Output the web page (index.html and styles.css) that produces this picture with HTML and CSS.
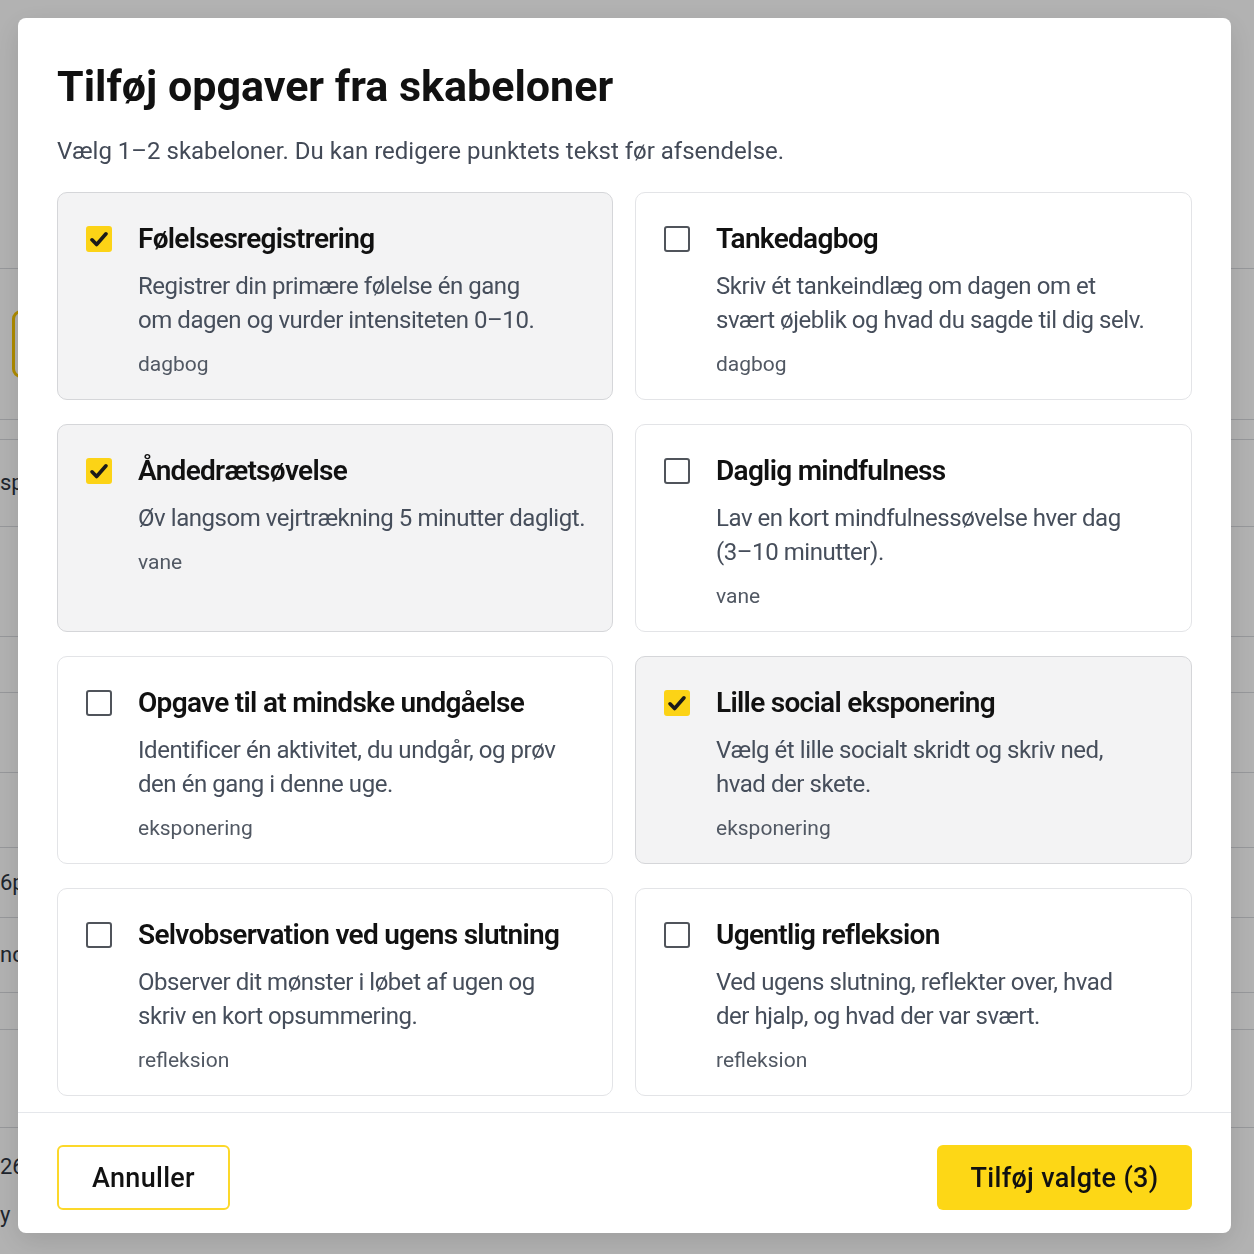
FILE: index.html
```html
<!DOCTYPE html>
<html lang="da">
<head>
<meta charset="utf-8">
<title>Tilføj opgaver fra skabeloner</title>
<link rel="stylesheet" href="styles.css">
</head>
<body>
<div class="page">
  <div class="bg-row h269"></div>
  <div class="bg-row h151"><span class="bg-box"></span></div>
  <div class="bg-row h20"></div>
  <div class="bg-row h87"><span class="bg-text">sp</span></div>
  <div class="bg-row h110"></div>
  <div class="bg-row h56"></div>
  <div class="bg-row h80"></div>
  <div class="bg-row h75"></div>
  <div class="bg-row h70"><span class="bg-text">6p</span></div>
  <div class="bg-row h75"><span class="bg-text">nc</span></div>
  <div class="bg-row h37"></div>
  <div class="bg-row h98"></div>
  <div class="bg-row h126 stack"><span class="bg-text">26</span><span class="bg-text">y</span></div>
</div>

<div class="overlay">
  <div class="modal" role="dialog" aria-labelledby="dlg-title">
    <div class="modal-body">
      <h1 class="title" id="dlg-title">Tilføj opgaver fra skabeloner</h1>
      <p class="subtitle">Vælg 1–2 skabeloner. Du kan redigere punktets tekst før afsendelse.</p>

      <div class="grid">
        <label class="card selected">
          <span class="check checked"><svg viewBox="0 0 24 24" class="tick"><path d="M5 12.8l4.6 4.7L19 6.8"/></svg></span>
          <span class="card-text">
            <span class="card-title">Følelsesregistrering</span>
            <span class="card-desc">Registrer din primære følelse én gang<br>om dagen og vurder intensiteten 0–10.</span>
            <span class="card-tag">dagbog</span>
          </span>
        </label>

        <label class="card">
          <span class="check"></span>
          <span class="card-text">
            <span class="card-title">Tankedagbog</span>
            <span class="card-desc">Skriv ét tankeindlæg om dagen om et<br>svært øjeblik og hvad du sagde til dig selv.</span>
            <span class="card-tag">dagbog</span>
          </span>
        </label>

        <label class="card selected">
          <span class="check checked"><svg viewBox="0 0 24 24" class="tick"><path d="M5 12.8l4.6 4.7L19 6.8"/></svg></span>
          <span class="card-text">
            <span class="card-title">Åndedrætsøvelse</span>
            <span class="card-desc">Øv langsom vejrtrækning 5 minutter dagligt.</span>
            <span class="card-tag">vane</span>
          </span>
        </label>

        <label class="card">
          <span class="check"></span>
          <span class="card-text">
            <span class="card-title">Daglig mindfulness</span>
            <span class="card-desc">Lav en kort mindfulnessøvelse hver dag<br>(3–10 minutter).</span>
            <span class="card-tag">vane</span>
          </span>
        </label>

        <label class="card">
          <span class="check"></span>
          <span class="card-text">
            <span class="card-title">Opgave til at mindske undgåelse</span>
            <span class="card-desc">Identificer én aktivitet, du undgår, og prøv<br>den én gang i denne uge.</span>
            <span class="card-tag">eksponering</span>
          </span>
        </label>

        <label class="card selected">
          <span class="check checked"><svg viewBox="0 0 24 24" class="tick"><path d="M5 12.8l4.6 4.7L19 6.8"/></svg></span>
          <span class="card-text">
            <span class="card-title">Lille social eksponering</span>
            <span class="card-desc">Vælg ét lille socialt skridt og skriv ned,<br>hvad der skete.</span>
            <span class="card-tag">eksponering</span>
          </span>
        </label>

        <label class="card">
          <span class="check"></span>
          <span class="card-text">
            <span class="card-title">Selvobservation ved ugens slutning</span>
            <span class="card-desc">Observer dit mønster i løbet af ugen og<br>skriv en kort opsummering.</span>
            <span class="card-tag">refleksion</span>
          </span>
        </label>

        <label class="card">
          <span class="check"></span>
          <span class="card-text">
            <span class="card-title">Ugentlig refleksion</span>
            <span class="card-desc">Ved ugens slutning, reflekter over, hvad<br>der hjalp, og hvad der var svært.</span>
            <span class="card-tag">refleksion</span>
          </span>
        </label>
      </div>
    </div>

    <div class="footer">
      <button class="btn btn-secondary" type="button">Annuller</button>
      <button class="btn btn-primary" type="button">Tilføj valgte (3)</button>
    </div>
  </div>
</div>
</body>
</html>
```

FILE: styles.css
```css
* {
  box-sizing: border-box;
  margin: 0;
  padding: 0;
}

html,
body {
  width: 1254px;
  height: 1254px;
  overflow: hidden;
}

body {
  font-family: Roboto, "Liberation Sans", Arial, sans-serif;
  background: #fbfbfb;
  color: #111111;
}

/* ---------- page behind the dialog ---------- */
.page {
  width: 100%;
  display: flex;
  flex-direction: column;
}

.bg-row {
  border-bottom: 1px solid #d4d6da;
  display: flex;
  align-items: center;
  font-size: 22px;
  color: #2d3440;
}

.bg-row.stack {
  flex-direction: column;
  align-items: flex-start;
  justify-content: center;
  gap: 20px;
  border-bottom: none;
}

.h269 { height: 269px; }
.h151 { height: 151px; }
.h20 { height: 20px; }
.h87 { height: 87px; }
.h110 { height: 110px; }
.h56 { height: 56px; }
.h80 { height: 80px; }
.h75 { height: 75px; }
.h70 { height: 70px; }
.h37 { height: 37px; }
.h98 { height: 98px; }
.h126 { height: 126px; }

.bg-box {
  margin-left: 12px;
  width: 120px;
  height: 68px;
  border: 3px solid #f5c400;
  border-radius: 9px;
}

.bg-text {
  line-height: 28px;
}

/* ---------- overlay + dialog ---------- */
.overlay {
  position: fixed;
  inset: 0;
  background: rgba(0, 0, 0, 0.29);
  padding: 18px 0 0 18px;
}

.modal {
  width: 1213px;
  background: #ffffff;
  border-radius: 8px;
  display: flex;
  flex-direction: column;
  box-shadow: 0 8px 28px rgba(0, 0, 0, 0.12);
}

.modal-body {
  padding: 43px 39px 16px;
}

.title {
  font-size: 43px;
  line-height: 50px;
  font-weight: 700;
  letter-spacing: 0;
  color: #111111;
}

.subtitle {
  margin-top: 23px;
  font-size: 24px;
  line-height: 34px;
  color: #434a57;
}

.grid {
  margin-top: 24px;
  display: grid;
  grid-template-columns: 556px 557px;
  column-gap: 22px;
  row-gap: 24px;
}

.card {
  display: flex;
  gap: 26px;
  padding: 28px 28px 20px;
  border: 1.5px solid #e3e4e7;
  border-radius: 10px;
  background: #ffffff;
  cursor: pointer;
}

.card.selected {
  background: #f3f3f4;
  border-color: #d5d6d9;
}

.check {
  flex: none;
  width: 26px;
  height: 26px;
  margin-top: 5px;
  border: 2px solid #50545b;
  border-radius: 3px;
  background: #ffffff;
  display: flex;
  align-items: center;
  justify-content: center;
}

.check.checked {
  background: #fcd316;
  border-color: #fcd316;
}

.tick {
  width: 24px;
  height: 24px;
  flex: none;
}

.tick path {
  fill: none;
  stroke: #1a1a1a;
  stroke-width: 3.6;
  stroke-linecap: round;
  stroke-linejoin: round;
}

.card-text {
  display: flex;
  flex-direction: column;
  white-space: nowrap;
}

.card-title {
  font-size: 28px;
  line-height: 36px;
  font-weight: 600;
  letter-spacing: -0.7px;
  color: #111111;
}

.card-desc {
  margin-top: 12px;
  font-size: 24px;
  line-height: 34px;
  letter-spacing: -0.45px;
  color: #464e5b;
}

.card-tag {
  margin-top: 12px;
  font-size: 21px;
  line-height: 30px;
  color: #515863;
}

.footer {
  border-top: 1.5px solid #e5e7eb;
  padding: 32px 39px 23px;
  display: flex;
  justify-content: space-between;
}

.btn {
  height: 65px;
  font-family: inherit;
  font-size: 27px;
  font-weight: 500;
  letter-spacing: 0.3px;
  color: #111111;
  border-radius: 6px;
  cursor: pointer;
}

.btn-secondary {
  width: 173px;
  border: 2px solid #fcd82a;
  background: #ffffff;
}

.btn-primary {
  width: 255px;
  border: none;
  background: #fdd716;
}
```
